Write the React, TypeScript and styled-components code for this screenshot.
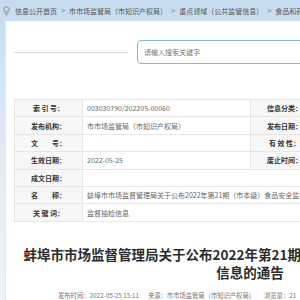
import React from "react";
import styled, { createGlobalStyle } from "styled-components";

const GlobalStyle = createGlobalStyle`
  html, body {
    margin: 0;
    padding: 0;
    overflow: hidden;
  }
  body {
    font-family: "Liberation Sans", "Noto Sans CJK SC", sans-serif;
    background: linear-gradient(180deg, #c6dcee 0px, #dce9f5 120px, #eef4fa 300px);
  }
`;

const crumbs = [
  "信息公开首页",
  "市市场监管局（市知识产权局）",
  "重点领域（公共监管信息）",
  "食品和药品安全监管信息",
];

type Cell = { label: string; value: string };

const pairRows: [Cell, Cell][] = [
  [
    { label: "索 引 号：", value: "003030790/202205-00060" },
    { label: "信息分类：", value: "食品安全监督抽检" },
  ],
  [
    { label: "发布机构：", value: "市市场监管局（市知识产权局）" },
    { label: "发布日期：", value: "2022-05-25" },
  ],
  [
    { label: "文　　号：", value: "" },
    { label: "有 效 性：", value: "有效" },
  ],
  [
    { label: "生效日期：", value: "2022-05-25" },
    { label: "废止时间：", value: "暂无" },
  ],
];

const title =
  "蚌埠市市场监督管理局关于公布2022年第21期（市本级）食品安全监督抽检信息的通告";

const wideRows: Cell[] = [
  { label: "成文日期：", value: "" },
  { label: "名　　称：", value: title },
  { label: "关 键 词：", value: "监督抽检信息" },
];

const PinIcon = () => (
  <svg width="7" height="10" viewBox="0 0 7 10">
    <path
      d="M3.5 0C1.6 0 0 1.5 0 3.4 0 5.8 3.5 10 3.5 10S7 5.8 7 3.4C7 1.5 5.4 0 3.5 0z"
      fill="#a9b4bd"
    />
    <circle cx="3.5" cy="3.4" r="1.3" fill="#dbe7f2" />
  </svg>
);

export default function App() {
  return (
    <Page>
      <GlobalStyle />
      <Breadcrumb>
        <PinIcon />
        {crumbs.map((c, i) => (
          <React.Fragment key={c}>
            {i > 0 && <Sep>&gt;</Sep>}
            <Crumb>{c}</Crumb>
          </React.Fragment>
        ))}
      </Breadcrumb>
      <Panel>
        <SearchRow>
          <Rule />
          <SearchInput placeholder="请输入搜索关键字" />
        </SearchRow>
        <InfoTable>
          <colgroup>
            <col style={{ width: 68 }} />
            <col style={{ width: 168 }} />
            <col style={{ width: 68 }} />
            <col style={{ width: 168 }} />
          </colgroup>
          <tbody>
            {pairRows.map(([a, b]) => (
              <tr key={a.label}>
                <Label>{a.label}</Label>
                <Value>{a.value}</Value>
                <Label>{b.label}</Label>
                <Value>{b.value}</Value>
              </tr>
            ))}
            {wideRows.map((r) => (
              <tr key={r.label}>
                <Label>{r.label}</Label>
                <Value colSpan={3}>{r.value}</Value>
              </tr>
            ))}
          </tbody>
        </InfoTable>
        <Title>{title}</Title>
        <Meta>
          <span>发布时间：2022-05-25 15:11</span>
          <span>来源：市市场监管局（市知识产权局）</span>
          <span>浏览量：21</span>
        </Meta>
      </Panel>
    </Page>
  );
}

const Page = styled.div`
  width: 520px;
  min-height: 300px;
`;

const Breadcrumb = styled.div`
  height: 21px;
  display: flex;
  align-items: center;
  padding-left: 3px;
  gap: 4px;
  white-space: nowrap;
  font-family: "Noto Sans CJK SC", sans-serif;
  font-size: 7px;
  color: #555;
`;

const Crumb = styled.span`
  &:first-of-type {
    margin-left: 1px;
  }
`;

const Sep = styled.span`
  font-family: "Liberation Sans", sans-serif;
  color: #777;
`;

const Panel = styled.div`
  margin-left: 5px;
  min-height: 279px;
  background: #fff;
  border-left: 1px solid #e0e9f1;
  padding: 0 8px 20px;
  box-sizing: border-box;
`;

const SearchRow = styled.div`
  display: flex;
  align-items: center;
  gap: 9px;
  padding-top: 19px;
`;

const Rule = styled.div`
  width: 114px;
  height: 1px;
  background: #dcdcdc;
`;

const SearchInput = styled.input`
  width: 340px;
  height: 24px;
  box-sizing: border-box;
  border: 1px solid #86b6dc;
  border-radius: 4px;
  padding: 0 6px;
  font-family: "Noto Sans CJK SC", sans-serif;
  font-size: 7px;
  outline: none;
  &::placeholder {
    color: #777;
  }
`;

const InfoTable = styled.table`
  margin-top: 35px;
  width: 472px;
  table-layout: fixed;
  border-collapse: collapse;
  border: 1px solid #e6e6e6;
  font-family: "Noto Sans CJK SC", sans-serif;
  font-size: 7px;

  tr {
    height: 17.4px;
  }
`;

const Label = styled.td`
  background: #f7f7f7;
  border: 1px solid #e6e6e6;
  text-align: center;
  font-weight: bold;
  color: #333;
  padding: 0;
  white-space: nowrap;
`;

const Value = styled.td`
  border: 1px solid #e6e6e6;
  color: #666;
  padding: 0 4px;
  white-space: nowrap;
  overflow: hidden;
`;

const Title = styled.h1`
  margin: 23px 0 0;
  width: 472px;
  box-sizing: border-box;
  padding: 0 8px;
  text-align: center;
  font-family: "Noto Sans CJK SC", sans-serif;
  font-size: 13.5px;
  line-height: 18px;
  font-weight: bold;
  color: #2b2b2b;
`;

const Meta = styled.div`
  margin-top: 10px;
  padding-left: 44px;
  display: flex;
  gap: 9px;
  font-family: "Noto Sans CJK SC", sans-serif;
  font-size: 6.3px;
  color: #777;
  white-space: nowrap;
`;
